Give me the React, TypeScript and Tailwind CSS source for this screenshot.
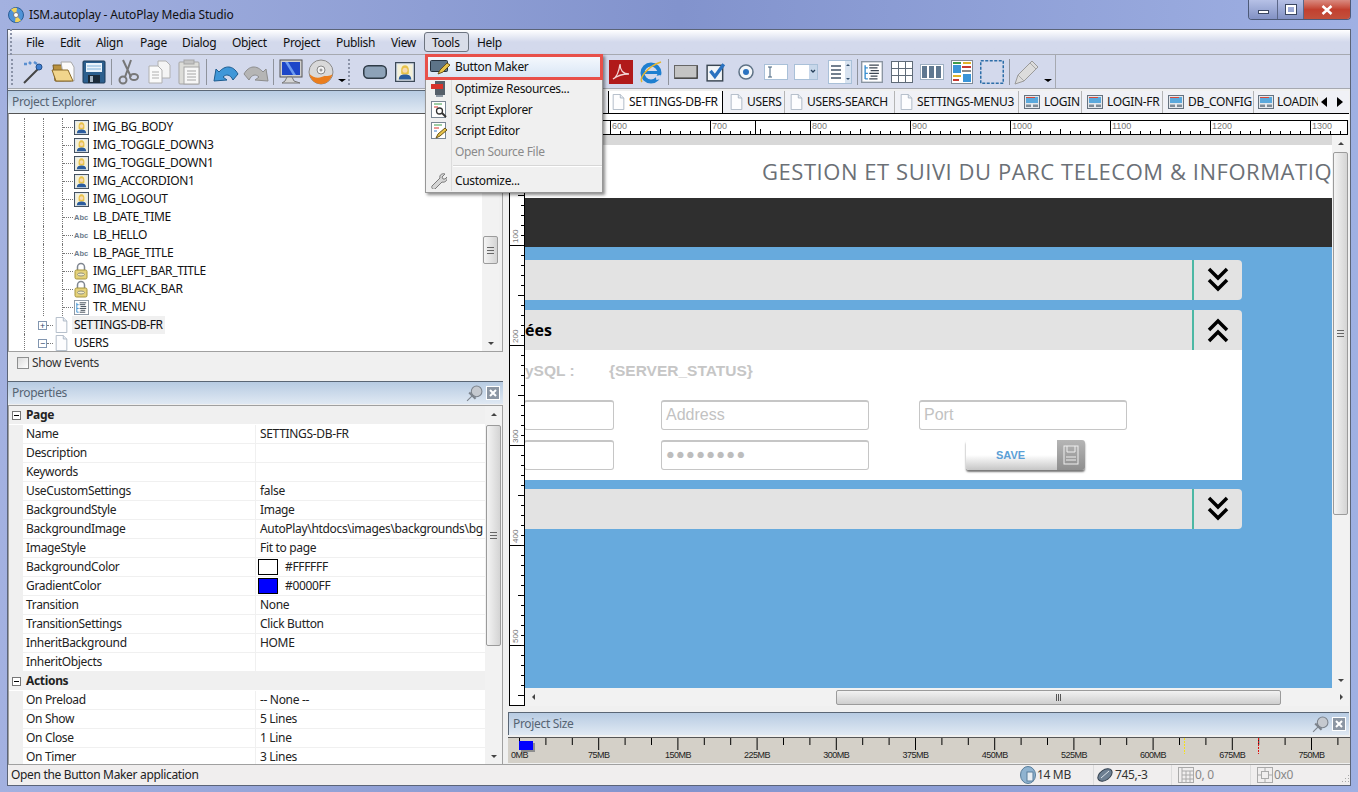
import React from 'react';

const font = "font-['Noto_Sans','Open_Sans',sans-serif]";

const Portrait = ({ s = 15 }: { s?: number }) => (
  <svg width={s} height={s} viewBox="0 0 16 16">
    <rect x="0.5" y="0.5" width="15" height="15" fill="#dfe6ee" stroke="#3d4a58" />
    <rect x="2" y="2" width="12" height="12" fill="#f5f1d8" />
    <path d="M5 9c-.5-4 .5-6.500 3-6.500S11.500 5 11 9l-1 1H6z" fill="#e8c24a" />
    <circle cx="8" cy="6.500" r="2" fill="#f7d9b0" />
    <path d="M3 14c0-3 2-4 5-4s5 1 5 4z" fill="#2b5c9e" />
  </svg>
);

const Abc = () => (
  <svg width="16" height="16" viewBox="0 0 16 16">
    <text x="1" y="11" fontSize="7.500" fontWeight="700" fill="#6d7c8c" fontFamily="Liberation Sans" letterSpacing="0">Abc</text>
  </svg>
);

const Lock = () => (
  <svg width="14" height="18" viewBox="0 0 14 18">
    <path d="M3.500 8V5a3.500 3.500 0 0 1 7 0v3" fill="none" stroke="#7f8690" strokeWidth="1.500" />
    <rect x="1" y="8" width="12" height="9" rx="1.500" fill="#e5d27a" stroke="#a8963f" />
    <ellipse cx="7" cy="12.500" rx="3.500" ry="1.500" fill="#f5efc8" stroke="#8f8f80" />
  </svg>
);

const TreeGlyph = ({ s = 15 }: { s?: number }) => (
  <svg width={s} height={s} viewBox="0 0 16 16">
    <rect x="0.500" y="0.500" width="15" height="15" fill="#fff" stroke="#8b96a3" />
    <path d="M3 3v10M3 5h2M3 9h2M3 13h2" stroke="#3a8fd0" fill="none" />
    <path d="M6 3h7M6 5h6M7 7h6M6 9h7M7 11h5M6 13h6" stroke="#3b4652" fill="none" />
  </svg>
);

const Doc = ({ h = 18 }: { h?: number }) => (
  <svg width="13" height={h} viewBox="0 0 13 18" className="shrink-0">
    <path d="M.5.500h8l4 4v13H.5z" fill="#fdfdfe" stroke="#a9b4c2" />
    <path d="M8.500.500v4h4" fill="#e6ebf1" stroke="#a9b4c2" />
  </svg>
);

const Screen = () => (
  <svg width="16" height="14" viewBox="0 0 16 14" className="shrink-0">
    <rect x="0.500" y="0.500" width="15" height="13" fill="#e4e8ed" stroke="#66727f" />
    <rect x="2" y="2" width="12" height="6" fill="#5aa8dc" />
    <path d="M2 2h9v1H2z" fill="#d8483a" />
    <rect x="2" y="9.500" width="5" height="2.500" fill="#7f8b97" />
    <rect x="9" y="9.500" width="5" height="2.500" fill="#7f8b97" />
  </svg>
);

const DropArrow = () => (
  <span className="w-0 h-0 border-x-[4px] border-x-transparent border-t-[3px] border-t-black" />
);

const toolIcons: Record<string, React.ReactNode> = {
  wand: (
    <svg width="26" height="26" viewBox="0 0 26 26">
      <path d="M3 24 17 10" stroke="#444" strokeWidth="2" />
      <circle cx="18" cy="8" r="3" fill="#3f7fd0" stroke="#24508c" />
      <path d="M3 5h3M13 3l3 2M8 3l2 2" stroke="#5a8fd0" strokeWidth="2.500" />
    </svg>
  ),
  folder: (
    <svg width="26" height="26" viewBox="0 0 26 26">
      <path d="M2 6h8l2 2h8v14H4z" fill="#b9913f" stroke="#7b5e25" />
      <path d="M10 3h10l3 5v14H13z" fill="#fbfbfb" stroke="#a8a8a8" />
      <path d="M1 11h16l5 11H5z" fill="#f1d58c" stroke="#8a6a2a" />
    </svg>
  ),
  floppy: (
    <svg width="24" height="24" viewBox="0 0 24 24">
      <rect x="1" y="1" width="22" height="22" rx="1" fill="#2c5f8e" stroke="#1c3a58" />
      <rect x="4" y="3" width="16" height="9" fill="#eaf3fb" />
      <path d="M5 6h14M5 9h14" stroke="#7fb2db" />
      <rect x="6" y="15" width="12" height="8" fill="#1c2b3a" />
      <rect x="8" y="16" width="3" height="6" fill="#a9b7c4" />
    </svg>
  ),
  scissors: (
    <svg width="24" height="26" viewBox="0 0 24 26" fill="none" stroke="#777">
      <path d="M6 1l8 17M14 1l-6 17" strokeWidth="2" />
      <circle cx="6" cy="21" r="3.500" strokeWidth="2" />
      <ellipse cx="17" cy="18" rx="4" ry="3" strokeWidth="2" />
    </svg>
  ),
  copy: (
    <svg width="24" height="26" viewBox="0 0 24 26" stroke="#b0b0b0">
      <path d="M11 2h8l4 4v13H11z" fill="#f4f4f4" />
      <path d="M2 7h9l4 4v13H2z" fill="#fafafa" />
      <path d="M5 13h7M5 16h7M5 19h7" />
    </svg>
  ),
  paste: (
    <svg width="24" height="26" viewBox="0 0 24 26" stroke="#a5a5a5">
      <rect x="2" y="3" width="20" height="22" rx="1" fill="#dcdcd8" />
      <rect x="7" y="1" width="10" height="4" fill="#c4c4c4" />
      <rect x="7" y="8" width="15" height="17" fill="#f7f7f7" />
      <path d="M10 12h9M10 15h9M10 18h9M10 21h9" />
    </svg>
  ),
  undo: (
    <svg width="26" height="22" viewBox="0 0 26 22">
      <path d="M1 20 3 8l3 3c6-7 14-7 19 2l-5 6c-3-6-7-6-10-3l4 3z" fill="#3f97d8" stroke="#1d5c90" />
    </svg>
  ),
  redo: (
    <svg width="26" height="22" viewBox="0 0 26 22">
      <path d="M25 20 23 8l-3 3C14 4 6 4 1 13l5 6c3-6 7-6 10-3l-4 3z" fill="#b5b5b5" stroke="#8d8d8d" />
    </svg>
  ),
  monitor: (
    <svg width="24" height="26" viewBox="0 0 24 26">
      <rect x="1" y="1" width="22" height="17" fill="#d0d0d0" stroke="#555" />
      <rect x="3" y="3" width="18" height="13" fill="#1d46c8" />
      <path d="M6 3l8 13h3L9 3z" fill="#6d9bf0" />
      <path d="M8 18l-2 4-3 2h18l-6-2-2-4z" fill="#d5d5d5" stroke="#777" />
    </svg>
  ),
  disc: (
    <svg width="26" height="26" viewBox="0 0 26 26">
      <circle cx="13" cy="13" r="12" fill="#d9d9d9" stroke="#8a8a8a" />
      <path d="M1.500 15c1 6 6 10 11.500 10s10-4 11.500-10c-3 3-7 1-11 3s-9 0-12-3z" fill="#ea7d1d" />
      <circle cx="13" cy="11" r="4" fill="#f5f5f5" stroke="#888" />
      <circle cx="13" cy="11" r="1.500" fill="#999" />
    </svg>
  ),
  button: (
    <svg width="24" height="14" viewBox="0 0 24 14">
      <rect x="0.750" y="0.750" width="22.500" height="12.500" rx="4.500" fill="#8da2b8" stroke="#2f3b47" strokeWidth="1.500" />
    </svg>
  ),
  portrait: <Portrait s={20} />,
  pdf: (
    <svg width="24" height="24" viewBox="0 0 24 24">
      <rect width="24" height="24" fill="#b11a1a" />
      <path d="M4 19c4-2 6-8 7-15 0 6 3 10 9 10-6 0-11 1-16 5z" fill="none" stroke="#f3d5d5" strokeWidth="1.300" />
    </svg>
  ),
  ie: (
    <svg width="24" height="24" viewBox="0 0 24 24">
      <circle cx="12" cy="13" r="8.500" fill="none" stroke="#1e7fd0" strokeWidth="4" />
      <path d="M5 12.500h15" stroke="#1e7fd0" strokeWidth="3" />
      <path d="M17 18l5-1" stroke="#d3d9ec" strokeWidth="4" />
      <path d="M3 22c-3-4 6-16 19-20" fill="none" stroke="#e6b52e" strokeWidth="1.500" />
    </svg>
  ),
  rect: (
    <svg width="24" height="14" viewBox="0 0 24 14">
      <rect x="0.500" y="0.500" width="23" height="13" fill="#c4c4c4" stroke="#666" />
      <path d="M1 13h22M23 1v12" stroke="#333" />
    </svg>
  ),
  check: (
    <svg width="20" height="20" viewBox="0 0 18 18">
      <rect x="1" y="3" width="14" height="14" fill="#f2f5f8" stroke="#3a4652" strokeWidth="1.300" />
      <path d="M4 8l4 5 8-11" fill="none" stroke="#2a72c0" strokeWidth="3" />
    </svg>
  ),
  radio: (
    <svg width="18" height="18" viewBox="0 0 18 18">
      <circle cx="9" cy="9" r="7" fill="#f4f7fa" stroke="#5e7286" strokeWidth="1.500" />
      <circle cx="9" cy="9" r="3" fill="#2a72c0" />
    </svg>
  ),
  input: (
    <svg width="24" height="16" viewBox="0 0 24 16">
      <rect x="0.500" y="0.500" width="23" height="15" fill="#fff" stroke="#a9c0d8" />
      <path d="M4 3h4M4 13h4M6 3v10" stroke="#44627f" />
    </svg>
  ),
  combo: (
    <svg width="24" height="16" viewBox="0 0 24 16">
      <rect x="0.500" y="0.500" width="23" height="15" fill="#fff" stroke="#a9c0d8" />
      <rect x="15" y="1" width="8" height="14" fill="#c7d7ea" />
      <path d="M17 6l2 2 2-2" stroke="#27405a" fill="none" strokeWidth="1.300" />
    </svg>
  ),
  list: (
    <svg width="24" height="24" viewBox="0 0 24 24">
      <rect x="0.500" y="0.500" width="23" height="23" fill="#fff" stroke="#a9c0d8" />
      <path d="M3 6h10M3 10h10M3 14h10M3 18h10" stroke="#44566a" strokeWidth="1.300" />
      <rect x="17" y="1" width="6" height="22" fill="#d8e3f0" />
      <path d="M18 6l2-2 2 2zM18 18l2 2 2-2z" fill="#34506c" />
    </svg>
  ),
  tree: <TreeGlyph s={22} />,
  grid: (
    <svg width="22" height="22" viewBox="0 0 22 22">
      <rect x="0.500" y="0.500" width="21" height="21" fill="#fff" stroke="#5f6b78" />
      <path d="M7.500 1v20M14.500 1v20M1 7.500h20M1 14.500h20" stroke="#5f6b78" />
    </svg>
  ),
  column: (
    <svg width="24" height="16" viewBox="0 0 24 16">
      <rect x="0.500" y="0.500" width="23" height="15" fill="#fff" stroke="#9eb0c2" />
      <path d="M2 2h5v12H2zM9 2h5v12H9zM16 2h5v12h-5z" fill="#5f7890" />
    </svg>
  ),
  layout: (
    <svg width="22" height="24" viewBox="0 0 22 24">
      <rect x="0.500" y="0.500" width="21" height="23" fill="#fff" stroke="#7f8a96" />
      <rect x="2" y="2" width="8" height="2" fill="#3f9c4a" />
      <rect x="12" y="2" width="8" height="2" fill="#e0b42a" />
      <rect x="2" y="5" width="8" height="8" fill="#3a94d8" />
      <rect x="11" y="6" width="9" height="2" fill="#c63a32" />
      <rect x="11" y="10" width="9" height="2" fill="#8a8a8a" />
      <rect x="2" y="15" width="8" height="2" fill="#e0b42a" />
      <rect x="2" y="19" width="6" height="2" fill="#c63a32" />
      <rect x="12" y="14" width="8" height="8" fill="#3a94d8" />
    </svg>
  ),
  dashed: (
    <svg width="24" height="24" viewBox="0 0 24 24">
      <rect x="0.750" y="0.750" width="22.500" height="22.500" fill="none" stroke="#2d6ea8" strokeWidth="1.500" strokeDasharray="3 1.500" />
    </svg>
  ),
  pencil: (
    <svg width="26" height="26" viewBox="0 0 26 26">
      <path d="M1 25l3-9L18 2l6 6-14 14z" fill="#dcdcdc" stroke="#9a9a9a" />
      <path d="M4 16l6 6M16 4l6 6" stroke="#a8a8a8" />
    </svg>
  ),
};

const Sep = () => <span className="w-px h-[26px] bg-[#8f939c] mx-[2px] shrink-0" />;
const Grip = () => <span className="w-[3px] h-[26px] shrink-0 border-l-2 border-dotted border-[#8b93a8]" />;

const ToolSlot = ({ name }: { name: string }) => (
  <span className="w-[30px] h-[32px] flex items-center justify-center shrink-0">{toolIcons[name]}</span>
);

const PanelHeader = ({ title, tools, right }: { title: string; tools?: boolean; right?: boolean }) => (
  <div className={`h-[23px] shrink-0 flex items-center justify-between border-t border-[#5a6675] bg-gradient-to-b from-[#b7cbe2] to-[#e0e9f3] pl-[4px] pr-[3px] text-[#566473] text-[12px] ${right ? 'border-l' : ''}`}>
    <span>{title}</span>
    {tools && (
      <span className="flex items-center gap-[3px]">
        <svg width="17" height="17" viewBox="0 0 16 16">
          <circle cx="10" cy="6" r="5" fill="#c5c9cf" stroke="#7c838c" />
          <path d="M6 10l-5 5" stroke="#7c838c" />
          <path d="M3 7l6 6" stroke="#7c838c" strokeWidth="2" />
        </svg>
        <span className="w-[14px] h-[14px] bg-[#8c96a3] border border-white text-white flex items-center justify-center">
          <svg width="8" height="8" viewBox="0 0 8 8"><path d="M1 1l6 6M7 1l-6 6" stroke="#fff" strokeWidth="2" /></svg>
        </span>
      </span>
    )}
  </div>
);

const ScrollArrow = ({ dir }: { dir: 'up' | 'down' | 'left' | 'right' }) => {
  const paths = { up: 'M1 5l3-3 3 3z', down: 'M1 3l3 3 3-3z', left: 'M5 1L2 4l3 3z', right: 'M3 1l3 3-3 3z' };
  return <svg width="8" height="8" viewBox="0 0 8 8"><path d={paths[dir]} fill="#444" /></svg>;
};

const VScroll = ({ before, thumb }: { before: number; thumb: number }) => (
  <div className="w-[17px] shrink-0 bg-[#f2f2f2] flex flex-col items-center">
    <span className="h-[17px] flex items-center shrink-0"><ScrollArrow dir="up" /></span>
    <span className="shrink-0" style={{ height: before }} />
    <span
      className="w-[15px] shrink-0 rounded-[2px] border border-[#9b9b9b] bg-gradient-to-r from-[#f4f4f4] to-[#d4d4d4] flex flex-col items-center justify-center gap-[2px]"
      style={{ height: thumb }}
    >
      <i className="w-[7px] h-px bg-[#666]" />
      <i className="w-[7px] h-px bg-[#666]" />
      <i className="w-[7px] h-px bg-[#666]" />
    </span>
    <span className="flex-1" />
    <span className="h-[17px] flex items-center shrink-0"><ScrollArrow dir="down" /></span>
  </div>
);

const treeItems: [string, React.ReactNode][] = [
  ['IMG_BG_BODY', <Portrait />],
  ['IMG_TOGGLE_DOWN3', <Portrait />],
  ['IMG_TOGGLE_DOWN1', <Portrait />],
  ['IMG_ACCORDION1', <Portrait />],
  ['IMG_LOGOUT', <Portrait />],
  ['LB_DATE_TIME', <Abc />],
  ['LB_HELLO', <Abc />],
  ['LB_PAGE_TITLE', <Abc />],
  ['IMG_LEFT_BAR_TITLE', <Lock />],
  ['IMG_BLACK_BAR', <Lock />],
  ['TR_MENU', <TreeGlyph />],
];

const Guide = ({ w }: { w: number }) => (
  <span className="shrink-0 h-full border-l border-dotted border-[#777]" style={{ width: w }} />
);

const PageRow = ({ label, sign, selected }: { label: string; sign: string; selected?: boolean }) => (
  <div className="h-[18px] flex items-center shrink-0">
    <Guide w={14} />
    <span className="relative w-[9px] h-[9px] shrink-0 border border-[#8296b0] bg-white flex items-center justify-center text-[#30456b] leading-none text-[9px]">
      {sign}
    </span>
    <span className="w-[6px] border-t border-dotted border-[#777] shrink-0 mr-[2px]" />
    <span className="w-[13px] h-[16px] shrink-0 flex items-center overflow-hidden"><Doc h={16} /></span>
    <span className={`ml-[4px] px-[2px] ${selected ? 'bg-[#f0f0f0]' : ''}`}>{label}</span>
  </div>
);

const ProjectExplorer = () => (
  <div className="h-[284px] shrink-0 flex flex-col">
    <PanelHeader title="Project Explorer" />
    <div className="h-[239px] flex border border-[#a0a0a0] border-t-[#555] bg-white pl-[15px]">
      <div className="flex-1 pt-[4px] overflow-hidden text-[12px] text-[#111]">
        {treeItems.map(([label, icon]) => (
          <div key={label} className="h-[18px] flex items-center">
            <Guide w={19} />
            <Guide w={19} />
            <Guide w={1} />
            <span className="w-[10px] border-t border-dotted border-[#777] shrink-0" />
            <span className="w-[16px] shrink-0 flex items-center justify-center">{icon}</span>
            <span className="ml-[4px]">{label}</span>
          </div>
        ))}
        <PageRow label="SETTINGS-DB-FR" sign="+" selected />
        <PageRow label="USERS" sign="−" />
      </div>
      <VScroll before={105} thumb={28} />
      <span className="w-[3px] bg-[#f0f0f0] shrink-0" />
    </div>
    <div className="h-[22px] flex items-center gap-[3px] pl-[9px] bg-[#f0f0f0] text-[12px] text-[#333]">
      <span className="w-[12px] h-[12px] border border-[#8e8f8f] bg-gradient-to-br from-[#dcdcdc] to-white" />
      Show Events
    </div>
  </div>
);

const props: [string, string, string?][] = [
  ['Name', 'SETTINGS-DB-FR'],
  ['Description', ''],
  ['Keywords', ''],
  ['UseCustomSettings', 'false'],
  ['BackgroundStyle', 'Image'],
  ['BackgroundImage', 'AutoPlay\\htdocs\\images\\backgrounds\\bg'],
  ['ImageStyle', 'Fit to page'],
  ['BackgroundColor', '#FFFFFF', 'bg-white'],
  ['GradientColor', '#0000FF', 'bg-[#0000ff]'],
  ['Transition', 'None'],
  ['TransitionSettings', 'Click Button'],
  ['InheritBackground', 'HOME'],
  ['InheritObjects', ''],
];

const actions: [string, string][] = [
  ['On Preload', '-- None --'],
  ['On Show', '5 Lines'],
  ['On Close', '1 Line'],
  ['On Timer', '3 Lines'],
];

const PropRow = ({ name, value, swatch }: { name: string; value: string; swatch?: string }) => (
  <div className="h-[19px] shrink-0 flex">
    <span className="w-[14px] shrink-0 bg-[#f0f0f0]" />
    <span className="w-[233px] shrink-0 pl-[3px] border-r border-b border-[#f0f0f0] flex items-center">{name}</span>
    <span className="flex-1 min-w-0 pl-[4px] border-b border-[#f0f0f0] flex items-center whitespace-nowrap overflow-hidden">
      {swatch && <span className={`w-[20px] h-[16px] border border-black mr-[7px] -ml-[2px] shrink-0 ${swatch}`} />}
      {value}
    </span>
  </div>
);

const SectionRow = ({ label }: { label: string }) => (
  <div className="h-[19px] shrink-0 flex items-center bg-[#f0f0f0] font-bold border-b border-white">
    <span className="w-[14px] shrink-0 flex justify-center">
      <span className="w-[9px] h-[9px] border border-[#777] bg-white flex items-center justify-center">
        <i className="w-[5px] h-px bg-black" />
      </span>
    </span>
    <span className="pl-[3px]">{label}</span>
  </div>
);

const Properties = () => (
  <div className="flex-1 min-h-0 flex flex-col mt-[7px]">
    <PanelHeader title="Properties" tools />
    <div className="flex-1 min-h-0 flex border border-[#a0a0a0] border-b-0 bg-white mt-px">
      <div className="flex-1 min-w-0 overflow-hidden text-[12px] text-[#222] bg-[#f0f0f0]">
        <div className="bg-white">
          <SectionRow label="Page" />
          {props.map(([n, v, s]) => <PropRow key={n} name={n} value={v} swatch={s} />)}
          <SectionRow label="Actions" />
          {actions.map(([n, v]) => <PropRow key={n} name={n} value={v} />)}
        </div>
      </div>
      <VScroll before={2} thumb={221} />
    </div>
  </div>
);

const tabs: [string, 'doc' | 'screen', number, number][] = [
  ['USERS', 'doc', 57, 2],
  ['USERS-SEARCH', 'doc', 110, 5],
  ['SETTINGS-MENU3', 'doc', 124, 5],
  ['LOGIN', 'screen', 63, 5],
  ['LOGIN-FR', 'screen', 81, 5],
  ['DB_CONFIG', 'screen', 91, 5],
];

const Tabs = () => (
  <div className="h-[23px] shrink-0 flex items-end border-b border-black bg-[#f0f1f6] text-[12px] text-[#111] overflow-hidden mt-px">
    <span className="w-[100px] shrink-0" />
    <span className="h-[23px] w-[115px] mr-[5px] shrink-0 bg-white border-l border-r border-t border-black flex items-center pl-[3px] gap-[4px]">
      <Doc h={16} />
      SETTINGS-DB-FR
    </span>
    {tabs.map(([label, kind, w, pad]) => (
      <span
        key={label}
        className="h-[22px] shrink-0 flex items-center gap-[4px] border-r border-[#b5b5b5] whitespace-nowrap"
        style={{ width: w, paddingLeft: pad }}
      >
        {kind === 'doc' ? <Doc h={16} /> : <Screen />}
        {label}
      </span>
    ))}
    <span className="h-[22px] w-[64px] shrink-0 flex items-center pl-[4px] gap-[3px] overflow-hidden whitespace-nowrap">
      <Screen />
      LOADIN
    </span>
    <span className="h-[22px] ml-[3px] flex items-center gap-[8px]">
      <svg width="7" height="10" viewBox="0 0 7 10"><path d="M6 0v10L0 5z" /></svg>
      <svg width="7" height="10" viewBox="0 0 7 10"><path d="M1 0v10l6-5z" /></svg>
    </span>
  </div>
);

const HRuler = () => {
  const ticks = Array.from({ length: 84 }, (_, i) => i);
  return (
    <svg width="840" height="15" className="block shrink-0">
      <rect x="0.500" y="0.500" width="839" height="14" fill="#fff" stroke="#000" />
      {ticks.map((i) => {
        const x = i * 10 + 2.5;
        const major = i % 10 === 0;
        const mid = i % 10 === 5;
        return <path key={i} d={`M${x} ${major ? 0 : mid ? 9 : 11}V15`} stroke="#000" />;
      })}
      <path d="M247.500 0V15" stroke="#000" />
      {[600, 700, 800, 900, 1000, 1100, 1200, 1300].map((n, i) => (
        <text key={n} x={104 + i * 100} y="9" fontSize="9" fill="#777" fontFamily="Liberation Sans" letterSpacing="0">{n}</text>
      ))}
    </svg>
  );
};

const VRuler = () => {
  const ticks = Array.from({ length: 57 }, (_, i) => i);
  return (
    <svg width="16" height="571" className="block shrink-0">
      <rect x="0.500" y="0.500" width="15" height="570" fill="#fff" stroke="#000" />
      {ticks.map((i) => {
        const y = i * 10 + 10.5;
        const major = i % 10 === 0;
        const mid = i % 10 === 5;
        return <path key={i} d={`M${major ? 0 : mid ? 9 : 12} ${y}H16`} stroke="#000" />;
      })}
      {[100, 200, 300, 400, 500].map((n, i) => (
        <text key={n} transform={`translate(9 ${108 + i * 100}) rotate(-90)`} fontSize="8" fill="#777" fontFamily="Liberation Sans" letterSpacing="0">{n}</text>
      ))}
    </svg>
  );
};

const Chevrons = ({ up }: { up?: boolean }) => (
  <svg width="22" height="30" viewBox="0 0 22 30" className={up ? 'rotate-180' : ''}>
    <path d="M2 4l9 9 9-9M2 15l9 9 9-9" fill="none" stroke="#000" strokeWidth="3.500" />
  </svg>
);

const AccordionBar = ({ up, children }: { up?: boolean; children?: React.ReactNode }) => (
  <div className={`w-[717px] h-[40px] bg-[#e3e3e3] flex rounded-tr-[4px] ${up ? '' : 'rounded-br-[4px]'}`}>
    <div className="flex-1 flex items-center overflow-hidden">{children}</div>
    <div className="w-[50px] border-l-2 border-[#4cb8a4] flex items-center justify-center">
      <Chevrons up={up} />
    </div>
  </div>
);

const Field = ({ w, ml, children }: { w: string; ml: string; children?: React.ReactNode }) => (
  <span className={`h-[30px] ${w} ${ml} shrink-0 bg-white border border-[#c6c6c6] rounded-[3px] border-t-2 flex items-center pl-[4px] pb-[2px] text-[#c2c2c2] text-[16px] font-['Liberation_Sans']`}>
    {children}
  </span>
);

const Canvas = () => (
  <div className="flex-1 min-w-0 min-h-0 flex flex-col bg-[#d8d8d8] pt-[10px] overflow-hidden tracking-normal">
    <div className="h-[53px] bg-white shrink-0 flex items-center pl-[237px] whitespace-nowrap overflow-hidden text-[22px] tracking-[0.55px] text-[#6b7076] font-['Open_Sans']">
      GESTION ET SUIVI DU PARC TELECOM &amp; INFORMATIQUE
    </div>
    <div className="h-[49px] bg-[#2f2f2f] shrink-0" />
    <div className="flex-1 bg-[#67aadd] pt-[13px]">
      <AccordionBar />
      <div className="mt-[10px]">
        <AccordionBar up>
          <span className="text-[16px] font-bold text-black font-['Open_Sans'] whitespace-nowrap">ées</span>
        </AccordionBar>
        <div className="w-[717px] h-[130px] bg-white font-['Liberation_Sans']">
          <div className="h-[40px] flex items-center pt-[1px] text-[15.500px] font-bold text-[#c6c6c6]">
            <span className="w-[84px] whitespace-nowrap">ySQL :</span>
            <span>{'{SERVER_STATUS}'}</span>
          </div>
          <div className="flex mt-[10px]">
            <Field w="w-[90px]" ml="-ml-px" />
            <Field w="w-[208px]" ml="ml-[47px]">Address</Field>
            <Field w="w-[208px]" ml="ml-[50px]">Port</Field>
          </div>
          <div className="flex mt-[10px]">
            <Field w="w-[90px]" ml="-ml-px" />
            <Field w="w-[208px]" ml="ml-[47px]">
              <span className="tracking-[1.300px] text-[#bdbdbd] text-[14.500px]">●●●●●●●●</span>
            </Field>
            <span className="ml-[97px] w-[119px] h-[30px] rounded-[3px] shadow-[0_2px_2px_#777] flex overflow-hidden bg-gradient-to-b from-white via-white to-[#c6c6c6]">
              <span className="flex-1 flex items-center justify-center text-[11px] font-bold text-[#5b9fd6] pr-[2px]">SAVE</span>
              <span className="w-[28px] bg-gradient-to-b from-[#b5b5b5] to-[#8f8f8f] flex items-center justify-center">
                <svg width="16" height="20" viewBox="0 0 16 20" fill="none" stroke="#eee">
                  <rect x="1" y="1" width="14" height="18" />
                  <path d="M4 1v6h8V1M3 12h10M3 15h10" />
                </svg>
              </span>
            </span>
          </div>
        </div>
      </div>
      <div className="mt-[9px]">
        <AccordionBar />
      </div>
    </div>
  </div>
);

const Document = () => (
  <div className="flex-1 min-h-0 flex flex-col">
    <Tabs />
    <div className="h-[6px] bg-white shrink-0" />
    <HRuler />
    <div className="flex-1 min-h-0 flex ml-px">
      <VRuler />
      <div className="flex-1 min-w-0 flex flex-col">
        <div className="flex-1 min-h-0 flex">
          <Canvas />
          <VScroll before={0} thumb={363} />
        </div>
        <div className="h-[18px] shrink-0 flex items-center bg-[#f2f2f2]">
          <span className="w-[17px] flex justify-center shrink-0"><ScrollArrow dir="left" /></span>
          <span className="ml-[294px] w-[445px] h-[15px] shrink-0 rounded-[2px] border border-[#9b9b9b] bg-gradient-to-b from-[#f2f2f2] to-[#cfcfcf] flex items-center justify-center gap-[1px]">
            <i className="w-px h-[7px] bg-[#555]" />
            <i className="w-px h-[7px] bg-[#555]" />
            <i className="w-px h-[7px] bg-[#555]" />
          </span>
          <span className="flex-1" />
          <span className="w-[17px] flex justify-center shrink-0"><ScrollArrow dir="right" /></span>
        </div>
      </div>
    </div>
  </div>
);

const SizeRuler = () => {
  const ticks = Array.from({ length: 32 }, (_, i) => i);
  const labels = ['0MB', '75MB', '150MB', '225MB', '300MB', '375MB', '450MB', '525MB', '600MB', '675MB', '750MB'];
  return (
    <svg width="842" height="26" className="block mt-[2px]">
      <rect width="842" height="26" fill="#d4d0c8" />
      <path d="M0 .5H842" stroke="#555" />
      {ticks.map((i) => (
        <path key={i} d={`M${11.5 + i * 26.4} 1v${i % 3 === 0 ? 12 : 7}`} stroke="#000" />
      ))}
      <rect x="13" y="6" width="14" height="9" fill="#8e8e8e" />
      <rect x="11" y="4" width="14" height="9" fill="#0000ff" />
      <path d="M676.500 1v16" stroke="#f5e11c" strokeDasharray="2 1" />
      <path d="M750.500 1v16" stroke="#e01010" strokeDasharray="2 1" />
      {labels.map((l, i) => (
        <text key={l} x={11.5 + i * 79.2} y="21" textAnchor="middle" fontSize="9" fontFamily="Liberation Sans" fill="#222" letterSpacing="-0.5">{l}</text>
      ))}
    </svg>
  );
};

const ProjectSize = () => (
  <div className="h-[52px] shrink-0 mt-[6px] flex flex-col">
    <PanelHeader title="Project Size" tools right />
    <SizeRuler />
  </div>
);

const StatusCell = ({ w, pad, icon, text, muted }: { w: number; pad: number; icon: React.ReactNode; text: string; muted?: boolean }) => (
  <span
    className={`shrink-0 flex items-center border-r border-[#dcdcdc] h-full gap-[1px] ${muted ? 'text-[#888]' : 'text-[#333]'}`}
    style={{ width: w, paddingLeft: pad }}
  >
    {icon}
    {text}
  </span>
);

const StatusBar = () => (
  <div className="h-[21px] shrink-0 flex items-center bg-[#f0eeee] border-t border-[#a0a0a0] text-[12px] text-[#222] pl-[3px]">
    <span className="flex-1">Open the Button Maker application</span>
    <StatusCell
      w={76}
      pad={2}
      text="14 MB"
      icon={
        <svg width="16" height="18" viewBox="0 0 16 18">
          <ellipse cx="8" cy="9" rx="7.500" ry="8.500" fill="#8fb3d0" stroke="#5a7f9c" />
          <rect x="7" y="6" width="6" height="9" fill="#e8eef3" stroke="#5a7f9c" />
        </svg>
      }
    />
    <StatusCell
      w={78}
      pad={2}
      text="745,-3"
      icon={
        <svg width="18" height="16" viewBox="0 0 18 16">
          <ellipse cx="9" cy="8" rx="8" ry="5" transform="rotate(-35 9 8)" fill="#6c7f92" stroke="#33414f" />
          <path d="M5 11l8-7" stroke="#dbe3ea" />
        </svg>
      }
    />
    <StatusCell
      w={79}
      pad={6}
      muted
      text="0, 0"
      icon={
        <svg width="16" height="16" viewBox="0 0 16 16" fill="none" stroke="#aaa">
          <rect x="0.500" y="0.500" width="15" height="15" />
          <path d="M4 1v14M8 4v11M12 4v11M4 4h11M4 8h11M4 12h11" />
        </svg>
      }
    />
    <span className="w-[99px] shrink-0 h-full flex items-center pl-[6px] gap-[1px] text-[#888]">
      <svg width="16" height="16" viewBox="0 0 16 16" fill="none" stroke="#aaa">
        <rect x="0.500" y="0.500" width="15" height="15" />
        <rect x="4.500" y="4.500" width="7" height="7" />
        <path d="M8 1v3M8 12v3M1 8h3M12 8h3" />
      </svg>
      0x0
      <svg width="12" height="12" viewBox="0 0 12 12" className="ml-auto self-end">
        <path d="M10 2h1v1h-1zM7 5h1v1H7zM10 5h1v1h-1zM4 8h1v1H4zM7 8h1v1H7zM10 8h1v1h-1z" fill="#a8a8a8" />
      </svg>
    </span>
  </div>
);

const MenuIcon = ({ kind }: { kind: string }) => {
  if (kind === 'button')
    return (
      <svg width="20" height="16" viewBox="0 0 20 16">
        <rect x="0.500" y="1.500" width="17" height="11" rx="1" fill="#5d7488" stroke="#26323e" />
        <path d="M8 15l2-4 7-7 3 2-7 7z" fill="#e8c44a" stroke="#6b5418" />
      </svg>
    );
  if (kind === 'optimize')
    return (
      <svg width="16" height="16" viewBox="0 0 16 16">
        <rect x="4" y="0" width="10" height="14" fill="#56606a" />
        <rect x="0" y="3" width="12" height="5" fill="#d8322a" />
        <path d="M5 14h7v2H5z" fill="#8d98a3" />
      </svg>
    );
  if (kind === 'explorer')
    return (
      <svg width="16" height="18" viewBox="0 0 16 18" fill="none">
        <rect x="0.500" y="0.500" width="14" height="16" fill="#fff" stroke="#7a8794" />
        <path d="M3 3h8" stroke="#3f9c4a" />
        <path d="M3 6h4" stroke="#d8322a" />
        <circle cx="8.500" cy="10" r="3" stroke="#333" strokeWidth="1.300" />
        <path d="M11 12l4 4" stroke="#333" strokeWidth="2" />
      </svg>
    );
  if (kind === 'editor')
    return (
      <svg width="16" height="18" viewBox="0 0 16 18" fill="none">
        <rect x="0.500" y="0.500" width="14" height="16" fill="#fff" stroke="#7a8794" />
        <path d="M3 3h8" stroke="#3f9c4a" />
        <path d="M3 6h5" stroke="#d8322a" />
        <path d="M3 9h3" stroke="#3a7fd0" />
        <path d="M5 16l2-4 7-6 2 2-7 6z" fill="#e8c44a" stroke="#6b5418" />
      </svg>
    );
  if (kind === 'wrench')
    return (
      <svg width="16" height="16" viewBox="0 0 16 16">
        <path d="M1 13l8-8c-1-3 2-5 5-4l-3 3 1 2 2 0 2-2c1 3-2 6-5 5l-7 7c-2 1-4-1-3-3z" fill="#d5d5d5" stroke="#7c7c7c" />
      </svg>
    );
  return null;
};

const menuRows: [string, string, boolean?][] = [
  ['Optimize Resources...', 'optimize'],
  ['Script Explorer', 'explorer'],
  ['Script Editor', 'editor'],
  ['Open Source File', '', true],
];

const ToolsMenu = () => (
  <div className="absolute left-[425px] top-[54px] w-[178px] h-[139px] bg-[#f0f0f0] border border-[#979797] shadow-[2px_2px_3px_rgba(0,0,0,0.45)] text-[12px] text-[#111] z-10">
    <div className="relative z-10 h-[26px] -ml-px -mt-px -mr-px -mb-[2px] border-[3px] border-[#e8504a] flex items-center bg-gradient-to-b from-[#f4f8fd] to-[#d9e6f5]">
      <span className="w-[23px] flex justify-center shrink-0"><MenuIcon kind="button" /></span>
      <span className="pl-[4px]">Button Maker</span>
    </div>
    {menuRows.map(([label, icon, off]) => (
      <div key={label} className="h-[21px] flex items-center">
        <span className="w-[26px] shrink-0 flex justify-center border-r border-[#dcdcdc] h-full items-center"><MenuIcon kind={icon} /></span>
        <span className={`pl-[3px] ${off ? 'text-[#8a8a8a]' : ''}`}>{label}</span>
      </div>
    ))}
    <div className="h-[8px] flex">
      <span className="w-[26px] border-r border-[#dcdcdc]" />
      <span className="flex-1 mt-[3px] h-[2px] border-t border-[#d7d7d7] border-b border-b-white ml-px" />
    </div>
    <div className="h-[21px] flex items-center">
      <span className="w-[26px] shrink-0 flex justify-center border-r border-[#dcdcdc] h-full items-center"><MenuIcon kind="wrench" /></span>
      <span className="pl-[3px]">Customize...</span>
    </div>
  </div>
);

const menuItems: [string, number][] = [
  ['File', 34],
  ['Edit', 36],
  ['Align', 44],
  ['Page', 42],
  ['Dialog', 50],
  ['Object', 51],
  ['Project', 53],
  ['Publish', 55],
  ['View', 33],
];

const CaptionButtons = () => (
  <div className="flex h-[20px] mr-[7px] rounded-b-[4px] border border-t-0 border-[#4d5a78] overflow-hidden shrink-0">
    <span className="w-[29px] bg-gradient-to-b from-[#b6c1e6] to-[#8291c4] border-r border-[#5b6788] flex items-center justify-center pt-[5px]">
      <i className="w-[11px] h-[4px] bg-white border border-[#3a4660]" />
    </span>
    <span className="w-[26px] bg-gradient-to-b from-[#b6c1e6] to-[#8291c4] border-r border-[#5b6788] flex items-center justify-center">
      <i className="w-[10px] h-[9px] border-2 border-white outline outline-[#3a4660] -outline-offset-0" />
    </span>
    <span className="w-[46px] bg-gradient-to-b from-[#d98a80] via-[#c2402f] to-[#c2503c] flex items-center justify-center">
      <svg width="12" height="10" viewBox="0 0 12 10"><path d="M1.500 1l9 8M10.500 1l-9 8" stroke="#fff" strokeWidth="2.500" /></svg>
    </span>
  </div>
);

export default function App() {
  return (
    <div className={`relative w-[1358px] h-[792px] overflow-hidden flex flex-col bg-gradient-to-r from-[#a3b1e0] via-[#8293cd] to-[#9fb0e3] tracking-[-0.33px] ${font}`}>
      <div className="h-[29px] shrink-0 flex items-start justify-between">
        <div className="flex items-center h-[29px] pl-[8px] gap-[5px] text-[#111]">
          <svg width="16" height="16" viewBox="0 0 16 16">
            <circle cx="8" cy="8" r="7.500" fill="#4f93d8" stroke="#2a5d96" />
            <path d="M8 8 3 2.500A7 7 0 0 1 9 1zM8 8l5 5.500A7 7 0 0 1 7 15z" fill="#f1d25a" />
            <circle cx="8" cy="8" r="2.500" fill="#fff" stroke="#777" />
          </svg>
          <span className="text-[12px] tracking-[-0.18px]">ISM.autoplay - AutoPlay Media Studio</span>
        </div>
        <CaptionButtons />
      </div>

      <div className="flex-1 min-h-0 mx-[7px] mb-[6px] flex flex-col border border-[#5b6478] bg-[#f0f0f0]">
        <div className="h-[25px] shrink-0 flex items-center text-[12px] text-[#111] bg-gradient-to-b from-white to-[#d3d9ec] to-50% border-b border-[#a6a9b0] pl-[2px]">
          <Grip />
          <span className="flex ml-[13px] pt-[1px]">
            {menuItems.map(([m, w]) => (
              <span key={m} className="shrink-0" style={{ width: w }}>{m}</span>
            ))}
          </span>
          <span className="w-[45px] shrink-0 pl-[7px] h-[20px] flex items-center border border-[#6d7480] rounded-[3px] bg-[#d9dde9] pt-[1px]">Tools</span>
          <span className="pl-[8px] pt-[1px]">Help</span>
        </div>

        <div className="h-[34px] shrink-0 flex items-center bg-[#d3d9ec] border-b border-[#a6a9b0] pl-[3px]">
          <Grip />
          <span className="w-[5px] shrink-0" />
          <ToolSlot name="wand" />
          <ToolSlot name="folder" />
          <ToolSlot name="floppy" />
          <Sep />
          <ToolSlot name="scissors" />
          <ToolSlot name="copy" />
          <ToolSlot name="paste" />
          <Sep />
          <span className="w-[2px] shrink-0" />
          <ToolSlot name="undo" />
          <ToolSlot name="redo" />
          <Sep />
          <ToolSlot name="monitor" />
          <ToolSlot name="disc" />
          <span className="w-[12px] h-[32px] flex items-end justify-center pb-[6px] shrink-0"><DropArrow /></span>
          <Grip />
          <span className="w-[9px] shrink-0" />
          <ToolSlot name="button" />
          <ToolSlot name="portrait" />
          <span className="w-[186px] shrink-0" />
          <ToolSlot name="pdf" />
          <ToolSlot name="ie" />
          <Sep />
          <ToolSlot name="rect" />
          <ToolSlot name="check" />
          <ToolSlot name="radio" />
          <ToolSlot name="input" />
          <ToolSlot name="combo" />
          <span className="w-[4px] shrink-0" />
          <ToolSlot name="list" />
          <Sep />
          <span className="-ml-[3px]" />
          <ToolSlot name="tree" />
          <ToolSlot name="grid" />
          <ToolSlot name="column" />
          <ToolSlot name="layout" />
          <ToolSlot name="dashed" />
          <Sep />
          <ToolSlot name="pencil" />
          <span className="w-[12px] h-[32px] flex items-end justify-center pb-[6px] shrink-0"><DropArrow /></span>
          <span className="w-px h-[33px] bg-[#a6a9b0] ml-px shrink-0" />
        </div>

        <div className="flex-1 min-h-0 flex pt-[1px]">
          <div className="w-[495px] shrink-0 flex flex-col mr-[5px]">
            <ProjectExplorer />
            <Properties />
          </div>
          <div className="flex-1 min-w-0 flex flex-col pr-[1px]">
            <Document />
            <ProjectSize />
          </div>
        </div>

        <StatusBar />
      </div>

      <ToolsMenu />
    </div>
  );
}
